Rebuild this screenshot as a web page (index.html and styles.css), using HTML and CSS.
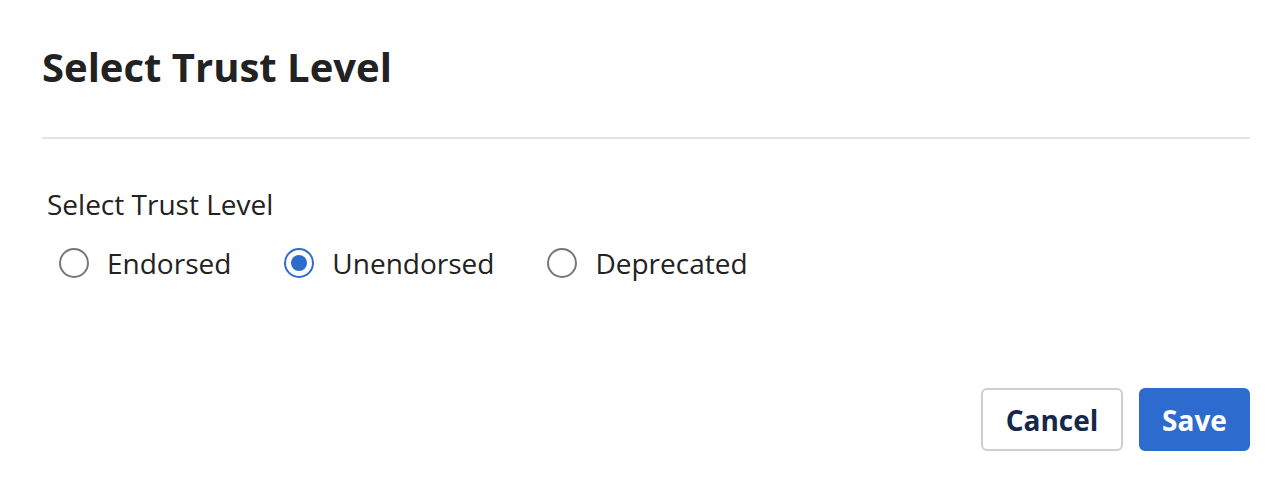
FILE: index.html
```html
<!DOCTYPE html>
<html>
<head>
<meta charset="utf-8">
<link rel="stylesheet" href="styles.css">
</head>
<body>
<div class="modal">
  <header class="modal-header">
    <h1 class="modal-title">Select Trust Level</h1>
  </header>
  <div class="modal-body">
    <div class="field-label">Select Trust Level</div>
    <div class="radio-group">
      <label class="radio"><span class="radio-circle"></span><span class="radio-text">Endorsed</span></label>
      <label class="radio"><span class="radio-circle checked"></span><span class="radio-text">Unendorsed</span></label>
      <label class="radio"><span class="radio-circle"></span><span class="radio-text">Deprecated</span></label>
    </div>
  </div>
  <footer class="modal-footer">
    <button class="btn btn-secondary">Cancel</button>
    <button class="btn btn-primary">Save</button>
  </footer>
</div>
</body>
</html>
```
FILE: styles.css
```css
html, body {
  margin: 0;
  padding: 0;
  background: #fff;
}
body {
  font-family: "Open Sans", "Noto Sans", sans-serif;
  color: #222;
}
.modal {
  padding: 0 36px 0 42px;
}
.modal-header {
  padding-top: 40px;
  height: 139px;
  box-sizing: border-box;
  border-bottom: 2px solid #e3e3e3;
}
.modal-title {
  margin: 0;
  font-size: 40px;
  font-weight: 700;
  line-height: 54px;
  color: #222;
}
.modal-body {
  padding: 46px 0 0 5px;
}
.field-label {
  font-size: 28px;
  line-height: 38px;
  color: #222;
}
.radio-group {
  display: flex;
  gap: 53px;
  margin-top: 21px;
  padding-left: 12px;
}
.radio {
  display: flex;
  align-items: center;
  gap: 18px;
  font-size: 28px;
  line-height: 38px;
  color: #222;
}
.radio-circle {
  width: 30px;
  height: 30px;
  box-sizing: border-box;
  border: 2px solid #767676;
  border-radius: 50%;
  position: relative;
}
.radio-circle.checked {
  border-color: #2d6bcf;
}
.radio-circle.checked::after {
  content: "";
  position: absolute;
  inset: 5px;
  border-radius: 50%;
  background: #2d6bcf;
}
.modal-footer {
  display: flex;
  justify-content: flex-end;
  gap: 16px;
  padding-top: 106px;
}
.btn {
  font-family: "Open Sans", "Noto Sans", sans-serif;
  font-size: 28px;
  font-weight: 700;
  height: 63px;
  border-radius: 6px;
  padding: 0;
  box-sizing: border-box;
  text-align: center;
}
.btn-secondary {
  background: #fff;
  border: 2px solid #cfcfcf;
  color: #15284b;
  width: 142px;
}
.btn-primary {
  background: #2d6bcf;
  border: 2px solid #2d6bcf;
  color: #fff;
  width: 111px;
}
```
